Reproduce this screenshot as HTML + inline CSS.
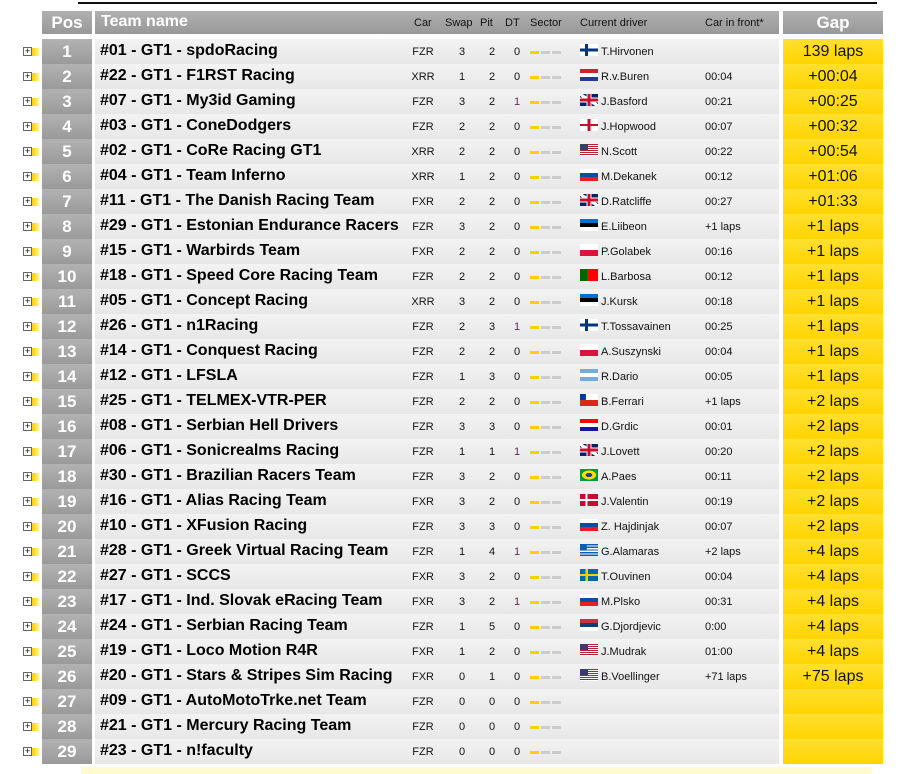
<!DOCTYPE html><html><head><meta charset="utf-8"><style>
body{margin:0;width:909px;height:774px;background:#fff;font-family:"Liberation Sans",Arial,sans-serif;position:relative;overflow:hidden}
.a{position:absolute}
.top{left:78px;top:2px;width:799px;height:2px;background:#111}
.h{position:absolute;top:11px;height:23px;background:linear-gradient(#b0b0b0,#999)}
.r{position:absolute;left:0;width:909px;height:25px}
.r>*{position:absolute}
.pl{left:23px;top:8px;width:7px;height:7px;border:1px solid #666;background:#fff;font-size:9px;line-height:7px;text-align:center;color:#000}
.ys{left:32px;top:9px;width:7px;height:8px;background:linear-gradient(90deg,#ffd000,#fff2a0)}
.p{left:42px;width:50px;height:25px;background:linear-gradient(#b2b2b2,#9a9a9a);color:#fff;font-weight:bold;font-size:17px;line-height:25px;text-align:center}
.m{left:95px;width:684px;height:25px;background:linear-gradient(#f3f3f3,#e7e7e7)}
.n{left:100px;top:3px;font-weight:bold;font-size:16px;color:#000;white-space:nowrap}
.s{font-size:11px;top:7px;color:#111;text-align:center;width:30px}
.c{left:408px}.w{left:447px}.t{left:477px}.d{left:502px}
.dp{color:#702060}
.b1,.b2,.b3{top:12px;height:3px;width:9px;background:#ccc}
.b1{left:530px;background:#ffd000}.b2{left:541px}.b3{left:552px}
.f{left:580px;top:5px;width:18px;height:12px}
.dr{left:601px;top:7px;font-size:11px;color:#111;white-space:nowrap}
.fr{left:705px;top:7px;font-size:11px;color:#111}
.g{left:783px;width:100px;height:25px;background:linear-gradient(#ffe030,#ffd400);font-size:16px;line-height:25px;text-align:center;color:#111}
.fi{background:linear-gradient(90deg,transparent 28%,#003580 28% 45%,transparent 45%),linear-gradient(#fff 38%,#003580 38% 62%,#fff 62%)}
.nl{background:linear-gradient(#d02030 33%,#fff 33% 66%,#203c90 66%)}
.gb{background:linear-gradient(90deg,transparent 42%,#c8102e 42% 58%,transparent 58%),linear-gradient(transparent 38%,#c8102e 38% 62%,transparent 62%),linear-gradient(90deg,transparent 35%,#fff 35% 65%,transparent 65%),linear-gradient(transparent 30%,#fff 30% 70%,transparent 70%),linear-gradient(33deg,#012169 42%,#fff 42% 58%,#012169 58%)}
.eng{background:linear-gradient(90deg,transparent 42%,#c8102e 42% 58%,transparent 58%),linear-gradient(#fff 40%,#c8102e 40% 60%,#fff 60%)}
.us{background:linear-gradient(#3c3b6e,#3c3b6e) 0 0/45% 54% no-repeat,repeating-linear-gradient(#b22234 0 1px,#fff 1px 2px)}
.sk{background:linear-gradient(#fff 33%,#0b4ea2 33% 66%,#ee1c25 66%)}
.ee{background:linear-gradient(#0072ce 33%,#000 33% 66%,#fff 66%)}
.pl2{background:linear-gradient(#fff 50%,#dc143c 50%)}
.pt{background:linear-gradient(90deg,#060 40%,#f00 40%)}
.ar{background:linear-gradient(#74acdf 33%,#fff 33% 66%,#74acdf 66%)}
.cl{background:linear-gradient(#0039a6,#0039a6) 0 0/33% 50% no-repeat,linear-gradient(#fff 50%,#d52b1e 50%)}
.hr{background:linear-gradient(#f00 33%,#fff 33% 66%,#171796 66%)}
.br{background:radial-gradient(ellipse 40% 38%,#223c8f 45%,#fedf00 48% 95%,transparent 100%),#009c3b}
.dk{background:linear-gradient(90deg,transparent 30%,#fff 30% 42%,transparent 42%),linear-gradient(#c60c30 42%,#fff 42% 58%,#c60c30 58%)}
.si{background:linear-gradient(#fff 33%,#0050a0 33% 66%,#ed1c24 66%)}
.gr{background:linear-gradient(#0d5eaf,#0d5eaf) 0 0/38% 55% no-repeat,repeating-linear-gradient(#0d5eaf 0 1.33px,#fff 1.33px 2.66px)}
.se{background:linear-gradient(90deg,transparent 30%,#fecc00 30% 45%,transparent 45%),linear-gradient(#006aa7 40%,#fecc00 40% 60%,#006aa7 60%)}
.rs{background:linear-gradient(#c6363c 33%,#0c4076 33% 66%,#fff 66%)}
.bot{left:81px;top:767px;width:791px;height:7px;background:#fffbd0}
</style></head><body>
<div class="a top"></div>
<div class="h" style="left:42px;width:50px;color:#fff;font-weight:bold;font-size:17px;line-height:23px;text-align:center">Pos</div>
<div class="h" style="left:95px;width:684px"></div>
<div class="a" style="left:101px;top:13px;color:#fff;font-weight:bold;font-size:16px">Team name</div>
<div class="a" style="top:17px;font-size:11px;color:#111;left:414px">Car</div>
<div class="a" style="top:17px;font-size:11px;color:#111;left:445px">Swap</div>
<div class="a" style="top:17px;font-size:11px;color:#111;left:480px">Pit</div>
<div class="a" style="top:17px;font-size:11px;color:#111;left:505px">DT</div>
<div class="a" style="top:17px;font-size:11px;color:#111;left:530px">Sector</div>
<div class="a" style="top:17px;font-size:11px;color:#111;left:580px">Current driver</div>
<div class="a" style="top:17px;font-size:11px;color:#111;left:705px">Car in front*</div>
<div class="h" style="left:783px;width:100px;color:#fff;font-weight:bold;font-size:17px;line-height:23px;text-align:center">Gap</div>

<div class="r" style="top:39px"><i class="pl">+</i><i class="ys"></i><div class="p">1</div><div class="m"></div><div class="n">#01 - GT1 - spdoRacing</div><div class="s c">FZR</div><div class="s w">3</div><div class="s t">2</div><div class="s d">0</div><i class="b1"></i><i class="b2"></i><i class="b3"></i><i class="f fi"></i><div class="dr">T.Hirvonen</div><div class="fr"></div><div class="g">139 laps</div></div>
<div class="r" style="top:64px"><i class="pl">+</i><i class="ys"></i><div class="p">2</div><div class="m"></div><div class="n">#22 - GT1 - F1RST Racing</div><div class="s c">XRR</div><div class="s w">1</div><div class="s t">2</div><div class="s d">0</div><i class="b1"></i><i class="b2"></i><i class="b3"></i><i class="f nl"></i><div class="dr">R.v.Buren</div><div class="fr">00:04</div><div class="g">+00:04</div></div>
<div class="r" style="top:89px"><i class="pl">+</i><i class="ys"></i><div class="p">3</div><div class="m"></div><div class="n">#07 - GT1 - My3id Gaming</div><div class="s c">FZR</div><div class="s w">3</div><div class="s t">2</div><div class="s d dp">1</div><i class="b1"></i><i class="b2"></i><i class="b3"></i><i class="f gb"></i><div class="dr">J.Basford</div><div class="fr">00:21</div><div class="g">+00:25</div></div>
<div class="r" style="top:114px"><i class="pl">+</i><i class="ys"></i><div class="p">4</div><div class="m"></div><div class="n">#03 - GT1 - ConeDodgers</div><div class="s c">FZR</div><div class="s w">2</div><div class="s t">2</div><div class="s d">0</div><i class="b1"></i><i class="b2"></i><i class="b3"></i><i class="f eng"></i><div class="dr">J.Hopwood</div><div class="fr">00:07</div><div class="g">+00:32</div></div>
<div class="r" style="top:139px"><i class="pl">+</i><i class="ys"></i><div class="p">5</div><div class="m"></div><div class="n">#02 - GT1 - CoRe Racing GT1</div><div class="s c">XRR</div><div class="s w">2</div><div class="s t">2</div><div class="s d">0</div><i class="b1"></i><i class="b2"></i><i class="b3"></i><i class="f us"></i><div class="dr">N.Scott</div><div class="fr">00:22</div><div class="g">+00:54</div></div>
<div class="r" style="top:164px"><i class="pl">+</i><i class="ys"></i><div class="p">6</div><div class="m"></div><div class="n">#04 - GT1 - Team Inferno</div><div class="s c">XRR</div><div class="s w">1</div><div class="s t">2</div><div class="s d">0</div><i class="b1"></i><i class="b2"></i><i class="b3"></i><i class="f sk"></i><div class="dr">M.Dekanek</div><div class="fr">00:12</div><div class="g">+01:06</div></div>
<div class="r" style="top:189px"><i class="pl">+</i><i class="ys"></i><div class="p">7</div><div class="m"></div><div class="n">#11 - GT1 - The Danish Racing Team</div><div class="s c">FXR</div><div class="s w">2</div><div class="s t">2</div><div class="s d">0</div><i class="b1"></i><i class="b2"></i><i class="b3"></i><i class="f gb"></i><div class="dr">D.Ratcliffe</div><div class="fr">00:27</div><div class="g">+01:33</div></div>
<div class="r" style="top:214px"><i class="pl">+</i><i class="ys"></i><div class="p">8</div><div class="m"></div><div class="n">#29 - GT1 - Estonian Endurance Racers</div><div class="s c">FZR</div><div class="s w">3</div><div class="s t">2</div><div class="s d">0</div><i class="b1"></i><i class="b2"></i><i class="b3"></i><i class="f ee"></i><div class="dr">E.Liibeon</div><div class="fr">+1 laps</div><div class="g">+1 laps</div></div>
<div class="r" style="top:239px"><i class="pl">+</i><i class="ys"></i><div class="p">9</div><div class="m"></div><div class="n">#15 - GT1 - Warbirds Team</div><div class="s c">FXR</div><div class="s w">2</div><div class="s t">2</div><div class="s d">0</div><i class="b1"></i><i class="b2"></i><i class="b3"></i><i class="f pl2"></i><div class="dr">P.Golabek</div><div class="fr">00:16</div><div class="g">+1 laps</div></div>
<div class="r" style="top:264px"><i class="pl">+</i><i class="ys"></i><div class="p">10</div><div class="m"></div><div class="n">#18 - GT1 - Speed Core Racing Team</div><div class="s c">FZR</div><div class="s w">2</div><div class="s t">2</div><div class="s d">0</div><i class="b1"></i><i class="b2"></i><i class="b3"></i><i class="f pt"></i><div class="dr">L.Barbosa</div><div class="fr">00:12</div><div class="g">+1 laps</div></div>
<div class="r" style="top:289px"><i class="pl">+</i><i class="ys"></i><div class="p">11</div><div class="m"></div><div class="n">#05 - GT1 - Concept Racing</div><div class="s c">XRR</div><div class="s w">3</div><div class="s t">2</div><div class="s d">0</div><i class="b1"></i><i class="b2"></i><i class="b3"></i><i class="f ee"></i><div class="dr">J.Kursk</div><div class="fr">00:18</div><div class="g">+1 laps</div></div>
<div class="r" style="top:314px"><i class="pl">+</i><i class="ys"></i><div class="p">12</div><div class="m"></div><div class="n">#26 - GT1 - n1Racing</div><div class="s c">FZR</div><div class="s w">2</div><div class="s t">3</div><div class="s d dp">1</div><i class="b1"></i><i class="b2"></i><i class="b3"></i><i class="f fi"></i><div class="dr">T.Tossavainen</div><div class="fr">00:25</div><div class="g">+1 laps</div></div>
<div class="r" style="top:339px"><i class="pl">+</i><i class="ys"></i><div class="p">13</div><div class="m"></div><div class="n">#14 - GT1 - Conquest Racing</div><div class="s c">FZR</div><div class="s w">2</div><div class="s t">2</div><div class="s d">0</div><i class="b1"></i><i class="b2"></i><i class="b3"></i><i class="f pl2"></i><div class="dr">A.Suszynski</div><div class="fr">00:04</div><div class="g">+1 laps</div></div>
<div class="r" style="top:364px"><i class="pl">+</i><i class="ys"></i><div class="p">14</div><div class="m"></div><div class="n">#12 - GT1 - LFSLA</div><div class="s c">FZR</div><div class="s w">1</div><div class="s t">3</div><div class="s d">0</div><i class="b1"></i><i class="b2"></i><i class="b3"></i><i class="f ar"></i><div class="dr">R.Dario</div><div class="fr">00:05</div><div class="g">+1 laps</div></div>
<div class="r" style="top:389px"><i class="pl">+</i><i class="ys"></i><div class="p">15</div><div class="m"></div><div class="n">#25 - GT1 - TELMEX-VTR-PER</div><div class="s c">FZR</div><div class="s w">2</div><div class="s t">2</div><div class="s d">0</div><i class="b1"></i><i class="b2"></i><i class="b3"></i><i class="f cl"></i><div class="dr">B.Ferrari</div><div class="fr">+1 laps</div><div class="g">+2 laps</div></div>
<div class="r" style="top:414px"><i class="pl">+</i><i class="ys"></i><div class="p">16</div><div class="m"></div><div class="n">#08 - GT1 - Serbian Hell Drivers</div><div class="s c">FZR</div><div class="s w">3</div><div class="s t">3</div><div class="s d">0</div><i class="b1"></i><i class="b2"></i><i class="b3"></i><i class="f hr"></i><div class="dr">D.Grdic</div><div class="fr">00:01</div><div class="g">+2 laps</div></div>
<div class="r" style="top:439px"><i class="pl">+</i><i class="ys"></i><div class="p">17</div><div class="m"></div><div class="n">#06 - GT1 - Sonicrealms Racing</div><div class="s c">FZR</div><div class="s w">1</div><div class="s t">1</div><div class="s d dp">1</div><i class="b1"></i><i class="b2"></i><i class="b3"></i><i class="f gb"></i><div class="dr">J.Lovett</div><div class="fr">00:20</div><div class="g">+2 laps</div></div>
<div class="r" style="top:464px"><i class="pl">+</i><i class="ys"></i><div class="p">18</div><div class="m"></div><div class="n">#30 - GT1 - Brazilian Racers Team</div><div class="s c">FZR</div><div class="s w">3</div><div class="s t">2</div><div class="s d">0</div><i class="b1"></i><i class="b2"></i><i class="b3"></i><i class="f br"></i><div class="dr">A.Paes</div><div class="fr">00:11</div><div class="g">+2 laps</div></div>
<div class="r" style="top:489px"><i class="pl">+</i><i class="ys"></i><div class="p">19</div><div class="m"></div><div class="n">#16 - GT1 - Alias Racing Team</div><div class="s c">FXR</div><div class="s w">3</div><div class="s t">2</div><div class="s d">0</div><i class="b1"></i><i class="b2"></i><i class="b3"></i><i class="f dk"></i><div class="dr">J.Valentin</div><div class="fr">00:19</div><div class="g">+2 laps</div></div>
<div class="r" style="top:514px"><i class="pl">+</i><i class="ys"></i><div class="p">20</div><div class="m"></div><div class="n">#10 - GT1 - XFusion Racing</div><div class="s c">FZR</div><div class="s w">3</div><div class="s t">3</div><div class="s d">0</div><i class="b1"></i><i class="b2"></i><i class="b3"></i><i class="f si"></i><div class="dr">Z. Hajdinjak</div><div class="fr">00:07</div><div class="g">+2 laps</div></div>
<div class="r" style="top:539px"><i class="pl">+</i><i class="ys"></i><div class="p">21</div><div class="m"></div><div class="n">#28 - GT1 - Greek Virtual Racing Team</div><div class="s c">FZR</div><div class="s w">1</div><div class="s t">4</div><div class="s d dp">1</div><i class="b1"></i><i class="b2"></i><i class="b3"></i><i class="f gr"></i><div class="dr">G.Alamaras</div><div class="fr">+2 laps</div><div class="g">+4 laps</div></div>
<div class="r" style="top:564px"><i class="pl">+</i><i class="ys"></i><div class="p">22</div><div class="m"></div><div class="n">#27 - GT1 - SCCS</div><div class="s c">FXR</div><div class="s w">3</div><div class="s t">2</div><div class="s d">0</div><i class="b1"></i><i class="b2"></i><i class="b3"></i><i class="f se"></i><div class="dr">T.Ouvinen</div><div class="fr">00:04</div><div class="g">+4 laps</div></div>
<div class="r" style="top:589px"><i class="pl">+</i><i class="ys"></i><div class="p">23</div><div class="m"></div><div class="n">#17 - GT1 - Ind. Slovak eRacing Team</div><div class="s c">FXR</div><div class="s w">3</div><div class="s t">2</div><div class="s d dp">1</div><i class="b1"></i><i class="b2"></i><i class="b3"></i><i class="f sk"></i><div class="dr">M.Plsko</div><div class="fr">00:31</div><div class="g">+4 laps</div></div>
<div class="r" style="top:614px"><i class="pl">+</i><i class="ys"></i><div class="p">24</div><div class="m"></div><div class="n">#24 - GT1 - Serbian Racing Team</div><div class="s c">FZR</div><div class="s w">1</div><div class="s t">5</div><div class="s d">0</div><i class="b1"></i><i class="b2"></i><i class="b3"></i><i class="f rs"></i><div class="dr">G.Djordjevic</div><div class="fr">0:00</div><div class="g">+4 laps</div></div>
<div class="r" style="top:639px"><i class="pl">+</i><i class="ys"></i><div class="p">25</div><div class="m"></div><div class="n">#19 - GT1 - Loco Motion R4R</div><div class="s c">FXR</div><div class="s w">1</div><div class="s t">2</div><div class="s d">0</div><i class="b1"></i><i class="b2"></i><i class="b3"></i><i class="f us"></i><div class="dr">J.Mudrak</div><div class="fr">01:00</div><div class="g">+4 laps</div></div>
<div class="r" style="top:664px"><i class="pl">+</i><i class="ys"></i><div class="p">26</div><div class="m"></div><div class="n">#20 - GT1 - Stars &amp; Stripes Sim Racing</div><div class="s c">FXR</div><div class="s w">0</div><div class="s t">1</div><div class="s d">0</div><i class="b1"></i><i class="b2"></i><i class="b3"></i><i class="f us"></i><div class="dr">B.Voellinger</div><div class="fr">+71 laps</div><div class="g">+75 laps</div></div>
<div class="r" style="top:689px"><i class="pl">+</i><i class="ys"></i><div class="p">27</div><div class="m"></div><div class="n">#09 - GT1 - AutoMotoTrke.net Team</div><div class="s c">FZR</div><div class="s w">0</div><div class="s t">0</div><div class="s d">0</div><i class="b1"></i><i class="b2"></i><i class="b3"></i><div class="g"></div></div>
<div class="r" style="top:714px"><i class="pl">+</i><i class="ys"></i><div class="p">28</div><div class="m"></div><div class="n">#21 - GT1 - Mercury Racing Team</div><div class="s c">FZR</div><div class="s w">0</div><div class="s t">0</div><div class="s d">0</div><i class="b1"></i><i class="b2"></i><i class="b3"></i><div class="g"></div></div>
<div class="r" style="top:739px"><i class="pl">+</i><i class="ys"></i><div class="p">29</div><div class="m"></div><div class="n">#23 - GT1 - n!faculty</div><div class="s c">FZR</div><div class="s w">0</div><div class="s t">0</div><div class="s d">0</div><i class="b1"></i><i class="b2"></i><i class="b3"></i><div class="g"></div></div>
<div class="a bot"></div>
</body></html>
